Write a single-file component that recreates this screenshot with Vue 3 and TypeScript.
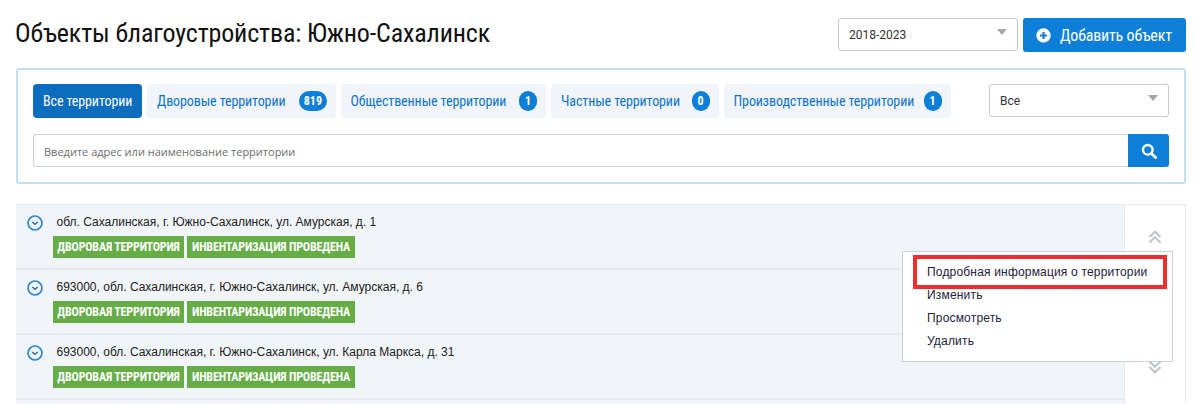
<script setup lang="ts">
interface Tab { label: string; count?: number; width: number }
const tabs: Tab[] = [
  { label: 'Все территории', width: 109 },
  { label: 'Дворовые территории', count: 819, width: 188.5 },
  { label: 'Общественные территории', count: 1, width: 205.5 },
  { label: 'Частные территории', count: 0, width: 167.5 },
  { label: 'Производственные территории', count: 1, width: 227 },
]
const rows: string[] = [
  'обл. Сахалинская, г. Южно-Сахалинск, ул. Амурская, д. 1',
  '693000, обл. Сахалинская, г. Южно-Сахалинск, ул. Амурская, д. 6',
  '693000, обл. Сахалинская, г. Южно-Сахалинск, ул. Карла Маркса, д. 31',
]
const menu: string[] = ['Изменить', 'Просмотреть', 'Удалить']
</script>

<template>
  <div class="page">
    <header class="head">
      <h1 class="title">Объекты благоустройства: Южно-Сахалинск</h1>
      <div class="head-tools">
        <div class="select select-year"><span>2018-2023</span><i class="caret"></i></div>
        <button class="add">
          <svg class="add-icon" width="15" height="15" viewBox="0 0 15 15"><circle cx="7.5" cy="7.5" r="7.2" fill="#fff"/><path d="M7.5 4v7M4 7.5h7" stroke="#0d7fd8" stroke-width="2.2"/></svg>
          <span>Добавить объект</span>
        </button>
      </div>
    </header>

    <section class="filter">
      <div class="filter-top">
        <div class="tabs">
          <button v-for="(t, i) in tabs" :key="t.label" class="tab" :class="{ active: i === 0 }" :style="{ width: t.width + 'px' }">
            <span>{{ t.label }}</span>
            <b v-if="t.count !== undefined" class="count">{{ t.count }}</b>
          </button>
        </div>
        <div class="select select-all"><span>Все</span><i class="caret"></i></div>
      </div>
      <div class="search">
        <div class="search-input">Введите адрес или наименование территории</div>
        <button class="search-btn" aria-label="Поиск">
          <svg width="16" height="16" viewBox="0 0 16 16" fill="none"><circle cx="6.8" cy="6.8" r="4.8" stroke="#fff" stroke-width="2.4"/><path d="M10.4 10.4l4.2 4.2" stroke="#fff" stroke-width="2.8" stroke-linecap="round"/></svg>
        </button>
      </div>
    </section>

    <div class="list-wrap">
      <div class="list">
        <div class="rows">
          <article v-for="r in rows" :key="r" class="row">
            <div class="row-line">
              <svg class="toggle" width="16" height="16" viewBox="0 0 16 16" fill="none"><circle cx="8" cy="8" r="7" stroke="#2b88d8" stroke-width="1.7"/><path d="M5.4 7l2.6 2.4L10.6 7" stroke="#1d5f9e" stroke-width="1.4"/></svg>
              <span class="addr">{{ r }}</span>
            </div>
            <div class="tags">
              <span class="tag tag-kind">Дворовая территория</span>
              <span class="tag tag-state">Инвентаризация проведена</span>
            </div>
          </article>
          <div class="row-next"></div>
        </div>
        <aside class="side">
          <svg width="14" height="14" viewBox="0 0 14 14" fill="none" stroke="#bcc6ce" stroke-width="2.2"><path d="M1.5 7L7 1.8 12.5 7M1.5 12.5L7 7.3l5.5 5.2"/></svg>
          <svg width="14" height="14" viewBox="0 0 14 14" fill="none" stroke="#bcc6ce" stroke-width="2.2"><path d="M1.5 1.5L7 6.7l5.5-5.2M1.5 7L7 12.2 12.5 7"/></svg>
        </aside>
      </div>
      <div class="menu">
        <div class="menu-item menu-hl">Подробная информация о территории</div>
        <div v-for="m in menu" :key="m" class="menu-item">{{ m }}</div>
      </div>
    </div>
  </div>
</template>

<style>
html, body { margin: 0; background: #fff; overflow: hidden; }
</style>

<style scoped>
.page {
  width: 1199px;
  height: 404px;
  box-sizing: border-box;
  padding: 18px 13px 0 16px;
  overflow: hidden;
  font-family: "Liberation Sans", Arial, sans-serif;
  color: #222;
}
.head { display: flex; justify-content: space-between; align-items: flex-start; height: 50px; }
.title {
  margin: 0 0 0 -1px;
  font-family: Roboto, sans-serif;
  font-stretch: 75%;
  font-weight: 400;
  font-size: 26px;
  letter-spacing: -.15px;
  line-height: 31px;
  color: #111;
  white-space: nowrap;
}
.head-tools { display: flex; gap: 5px; }
.select {
  box-sizing: border-box;
  width: 180px;
  height: 33px;
  border: 1px solid #c8c8c8;
  border-radius: 3px;
  background: #fff;
  display: flex;
  align-items: center;
  justify-content: space-between;
  padding: 0 10px;
  font-family: Roboto, sans-serif;
  font-size: 12px;
  color: #333;
}
.caret {
  width: 0;
  height: 0;
  margin-bottom: 5px;
  border-left: 5px solid transparent;
  border-right: 5px solid transparent;
  border-top: 6px solid #a6a6a6;
}
.add {
  width: 163px;
  height: 34px;
  border: 0;
  border-radius: 3px;
  background: #0d7fd8;
  color: #fff;
  display: flex;
  align-items: center;
  gap: 9px;
  padding: 0 0 0 13px;
  font-family: Roboto, sans-serif;
  font-stretch: 75%;
  font-size: 16px;
  letter-spacing: -.2px;
  white-space: nowrap;
}
.add-icon { flex: none; }
.filter {
  box-sizing: border-box;
  height: 116px;
  border: 2px solid #c3e0f6;
  border-radius: 3px;
  padding: 14px 15px 0;
}
.filter-top { display: flex; justify-content: space-between; align-items: flex-start; }
.tabs { display: flex; gap: 5px; }
.tab {
  box-sizing: border-box;
  height: 34px;
  border: 0;
  border-radius: 4px;
  background: #f1f4f8;
  color: #0d74c9;
  display: flex;
  align-items: center;
  justify-content: space-between;
  padding: 0 9px 0 10px;
  font-family: Roboto, sans-serif;
  font-stretch: 75%;
  font-size: 14px;
  letter-spacing: -.1px;
  font-weight: 400;
  white-space: nowrap;
}
.tab.active { background: #0c6cbd; color: #fff; }
.count {
  flex: none;
  min-width: 18px;
  height: 20px;
  box-sizing: border-box;
  padding: 0 4.5px;
  border-radius: 10px;
  background: #0d7fd8;
  color: #fff;
  font-size: 12px;
  letter-spacing: 0;
  line-height: 20px;
  text-align: center;
}
.search { display: flex; margin-top: 16px; }
.search-input {
  box-sizing: border-box;
  flex: 1;
  height: 33px;
  line-height: 34px;
  border: 1px solid #ccd3da;
  border-right: 0;
  border-radius: 3px 0 0 3px;
  padding-left: 10px;
  font-family: "Open Sans", sans-serif;
  font-size: 11px;
  color: #6d6d6d;
}
.search-btn {
  width: 41px;
  height: 33px;
  border: 0;
  border-radius: 0 3px 3px 0;
  background: #0d7fd8;
  display: flex;
  align-items: center;
  justify-content: center;
  padding: 0;
}
.list-wrap { position: relative; margin-top: 20px; }
.list { display: flex; border-top: 1px solid #e6eaee; }
.rows { width: 1108px; }
.row {
  box-sizing: border-box;
  height: 65px;
  background: #f1f4f8;
  border-bottom: 2px solid #e6eaee;
  padding: 9px 0 0 11px;
}
.row-line { display: flex; align-items: center; height: 16px; }
.toggle { flex: none; margin-top: 1px; }
.addr { margin-left: 13.5px; font-size: 12px; line-height: 16px; color: #222; }
.tags { display: flex; gap: 3px; margin: 6px 0 0 26px; }
.tag {
  flex: none;
  box-sizing: border-box;
  height: 22px;
  line-height: 22px;
  text-align: center;
  background: #66ad47;
  color: #fff;
  text-transform: uppercase;
  font-family: Roboto, sans-serif;
  font-stretch: 75%;
  font-weight: 700;
  font-size: 12px;
  letter-spacing: -.17px;
}
.tag-kind { width: 131px; }
.tag-state { width: 168px; }
.row-next { height: 10px; background: #f1f4f8; }
.side {
  box-sizing: border-box;
  width: 62px;
  height: 200px;
  background: #fff;
  border-left: 1px solid #e6eaee;
  border-right: 1px solid #e6eaee;
  display: flex;
  flex-direction: column;
  align-items: center;
  gap: 116px;
  padding-top: 25px;
}
.menu {
  position: absolute;
  left: 886px;
  top: 47px;
  box-sizing: border-box;
  width: 271px;
  height: 111px;
  background: #fff;
  border: 1px solid #cdd2d8;
  padding: 3px 5px 0 10px;
}
.menu-item {
  height: 23px;
  line-height: 23px;
  padding-left: 14px;
  font-size: 12px;
  letter-spacing: .18px;
  color: #23223c;
}
.menu-hl {
  box-sizing: border-box;
  height: 34px;
  line-height: 27px;
  margin-bottom: -5px;
  padding-left: 10px;
  border: 4px solid #ee2e2e;
  position: relative;
  z-index: 1;
}
</style>
